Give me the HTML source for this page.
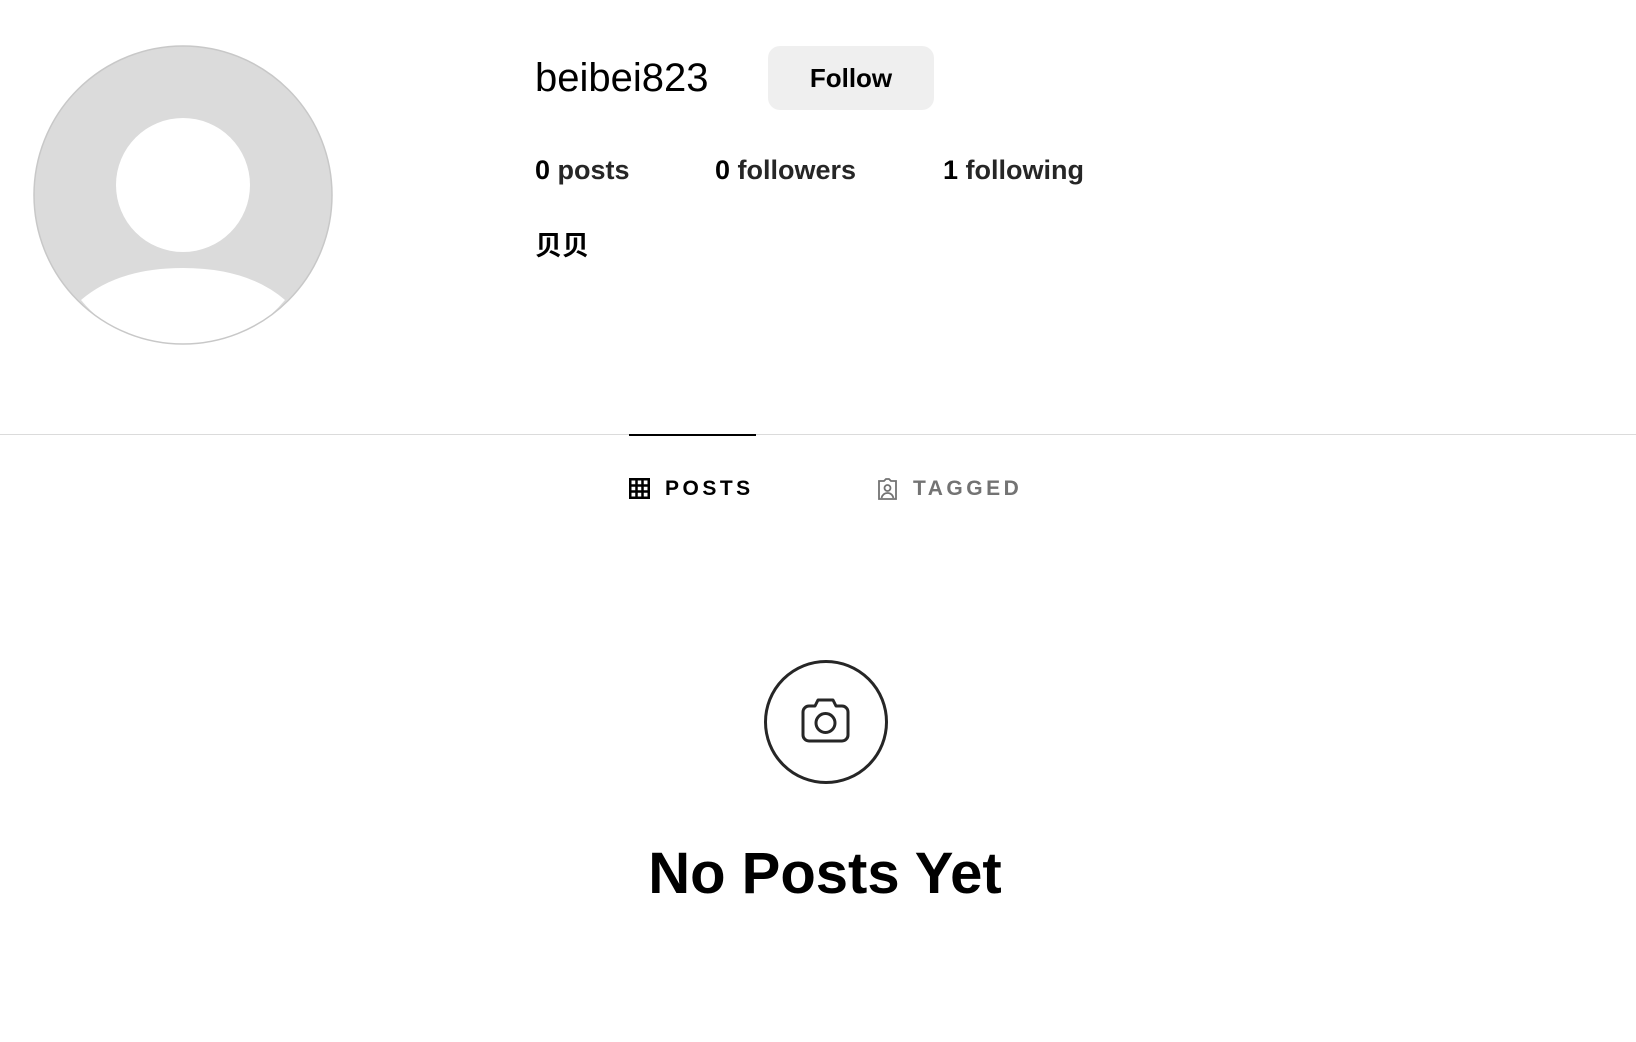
<!DOCTYPE html>
<html><head><meta charset="utf-8"><style>
body{margin:0;width:1636px;height:1042px;background:#fff;position:relative;overflow:hidden;font-family:"Liberation Sans","Noto Sans CJK SC",sans-serif;color:#000}
.a{position:absolute}
</style></head><body>
<svg class="a" style="left:33px;top:45px" width="300" height="300" viewBox="0 0 300 300">
<defs><clipPath id="c"><circle cx="150" cy="150" r="149"/></clipPath></defs>
<circle cx="150" cy="150" r="149" fill="#dbdbdb"/>
<g clip-path="url(#c)">
<circle cx="150" cy="140" r="67" fill="#fff"/>
<path d="M48 255 Q85 223 150 223 Q215 223 252 255 Q215 300 150 300 Q85 300 48 255Z" fill="#fff"/>
</g>
<circle cx="150" cy="150" r="149" fill="none" stroke="#c8c8c8" stroke-width="1.5"/>
</svg>
<div class="a" style="left:535px;top:55px;font-size:40px;line-height:46px">beibei823</div>
<div class="a" style="left:768px;top:46px;width:166px;height:64px;background:#efefef;border-radius:12px;font-weight:bold;font-size:26px;line-height:64px;text-align:center">Follow</div>
<div class="a" style="left:535px;top:154px;font-size:27px;font-weight:bold;line-height:32px;color:#262626"><span style="color:#000">0</span> posts</div>
<div class="a" style="left:715px;top:154px;font-size:27px;font-weight:bold;line-height:32px;color:#262626"><span style="color:#000">0</span> followers</div>
<div class="a" style="left:943px;top:154px;font-size:27px;font-weight:bold;line-height:32px;color:#262626"><span style="color:#000">1</span> following</div>
<div class="a" style="left:535px;top:231px;font-size:27px;font-weight:bold;line-height:30px">贝贝</div>
<div class="a" style="left:0;top:434px;width:1636px;height:1px;background:#dbdbdb"></div>
<div class="a" style="left:629px;top:434px;width:127px;height:2px;background:#000"></div>
<svg class="a" style="left:629px;top:478px" width="21" height="21" viewBox="0 0 21 21"><g fill="none" stroke="#000" stroke-width="2.5"><rect x="1.25" y="1.25" width="18.5" height="18.5"/><path d="M7.5 1v19M13.5 1v19M1 7.5h19M1 13.5h19"/></g></svg>
<div class="a" style="left:665px;top:477px;font-size:21px;font-weight:bold;letter-spacing:3.5px;line-height:24px">POSTS</div>
<svg class="a" style="left:876px;top:478px" width="23" height="23" viewBox="0 0 23 23"><g fill="none" stroke="#737373" stroke-width="1.8"><path d="M8 3H3v18h17V3h-5l-2-2h-3z"/><circle cx="11.5" cy="10" r="3"/><path d="M5.5 20c1-3.5 3.5-5 6-5s5 1.5 6 5"/></g></svg>
<div class="a" style="left:913px;top:477px;font-size:21px;font-weight:bold;letter-spacing:3.5px;line-height:24px;color:#737373">TAGGED</div>
<svg class="a" style="left:763px;top:659px" width="126" height="126" viewBox="0 0 126 126">
<circle cx="63" cy="63" r="60.5" fill="none" stroke="#262626" stroke-width="3"/>
<g fill="none" stroke="#262626" stroke-width="3" stroke-linejoin="round">
<path d="M40 53a6 6 0 0 1 6-6h6l3-6h15l3 6h6a6 6 0 0 1 6 6v23a6 6 0 0 1-6 6H46a6 6 0 0 1-6-6z"/>
<circle cx="62.5" cy="64" r="9.5"/></g></svg>
<div class="a" style="left:0;width:1650px;top:840px;text-align:center;font-size:58px;font-weight:bold;line-height:68px">No Posts Yet</div>
</body></html>
